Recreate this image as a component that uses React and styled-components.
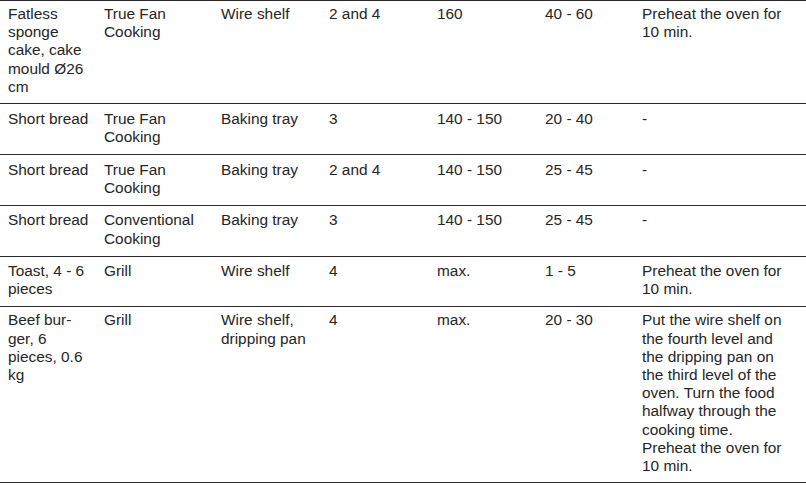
import React from 'react'
import styled, { createGlobalStyle } from 'styled-components'

const GlobalStyle = createGlobalStyle`
  html, body {
    margin: 0;
    padding: 0;
    background: #ffffff;
  }
  body {
    font-family: 'Liberation Sans', Arial, sans-serif;
  }
`

const columns = '96px 117px 108px 108px 108px 97px 1fr'

// each cell is a list of lines, as broken in the printed manual
const rows = [
  [
    ['Fatless', 'sponge', 'cake, cake', 'mould Ø26', 'cm'],
    ['True Fan', 'Cooking'],
    ['Wire shelf'],
    ['2 and 4'],
    ['160'],
    ['40 - 60'],
    ['Preheat the oven for', '10 min.']
  ],
  [
    ['Short bread'],
    ['True Fan', 'Cooking'],
    ['Baking tray'],
    ['3'],
    ['140 - 150'],
    ['20 - 40'],
    ['-']
  ],
  [
    ['Short bread'],
    ['True Fan', 'Cooking'],
    ['Baking tray'],
    ['2 and 4'],
    ['140 - 150'],
    ['25 - 45'],
    ['-']
  ],
  [
    ['Short bread'],
    ['Conventional', 'Cooking'],
    ['Baking tray'],
    ['3'],
    ['140 - 150'],
    ['25 - 45'],
    ['-']
  ],
  [
    ['Toast, 4 - 6', 'pieces'],
    ['Grill'],
    ['Wire shelf'],
    ['4'],
    ['max.'],
    ['1 - 5'],
    ['Preheat the oven for', '10 min.']
  ],
  [
    ['Beef bur-', 'ger, 6', 'pieces, 0.6', 'kg'],
    ['Grill'],
    ['Wire shelf,', 'dripping pan'],
    ['4'],
    ['max.'],
    ['20 - 30'],
    [
      'Put the wire shelf on',
      'the fourth level and',
      'the dripping pan on',
      'the third level of the',
      'oven. Turn the food',
      'halfway through the',
      'cooking time.',
      'Preheat the oven for',
      '10 min.'
    ]
  ]
]

const App = () => {
  return (
    <>
      <GlobalStyle />
      <Table>
        {rows.map((row, r) => {
          const tall = row.some((lines) => lines.length > 2)
          return (
            <Row key={r} $tall={tall}>
              {row.map((lines, c) => (
                <Cell key={c}>
                  {lines.map((line, i) => (
                    <Line key={i}>{line}</Line>
                  ))}
                </Cell>
              ))}
            </Row>
          )
        })}
      </Table>
    </>
  )
}

const Table = styled.div`
  width: 806px;
  border-top: 1px solid #2b2b2b;
  color: #262626;
  font-size: 15.4px;
  line-height: 18.2px;
`

const Row = styled.div`
  display: grid;
  grid-template-columns: ${columns};
  box-sizing: border-box;
  min-height: 50.75px;
  padding-top: ${(p) => (p.$tall ? '4px' : '5.5px')};
  border-bottom: 1px solid #2b2b2b;
`

const Cell = styled.div`
  padding: 0 4px 7.3px 8px;
`

const Line = styled.div`
  white-space: nowrap;
`

export default App
